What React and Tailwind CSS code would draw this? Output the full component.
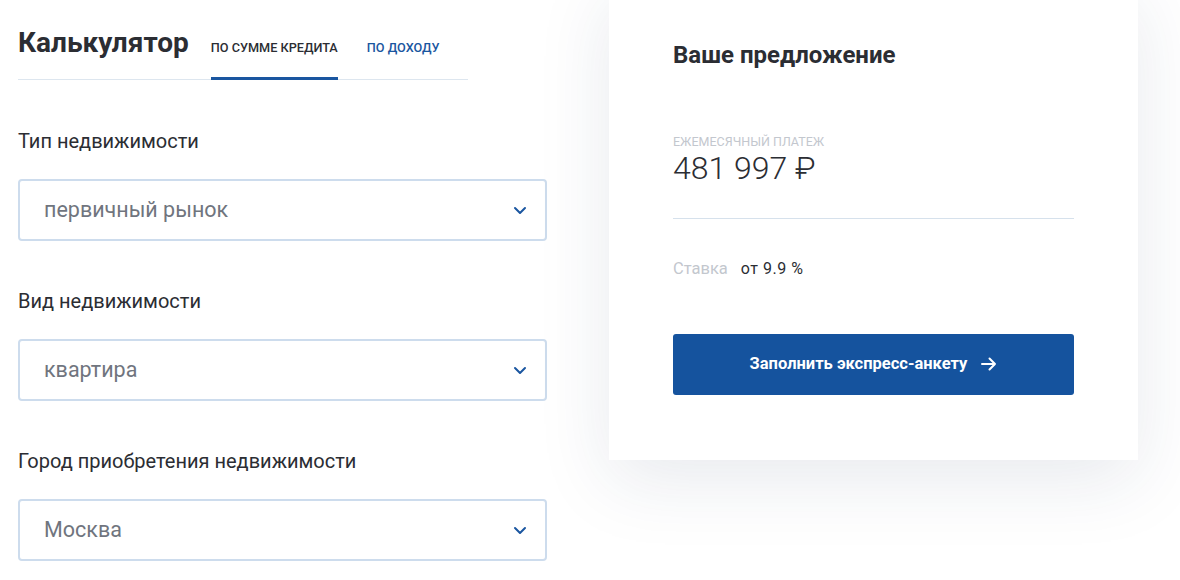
import React from "react";

const font = { fontFamily: "Roboto, 'Noto Sans', sans-serif" };

function Chevron() {
  return (
    <svg width="14" height="9" viewBox="0 0 14 9" fill="none">
      <path d="M2 2l5 5 5-5" stroke="#1a56a0" strokeWidth="2" strokeLinecap="round" strokeLinejoin="round" />
    </svg>
  );
}

function SelectField({ label, value }) {
  return (
    <div>
      <div className="text-[20px] leading-6 text-[#2b2d33]">{label}</div>
      <div className="mt-[26px] h-[62px] border-2 border-[#cddced] rounded-[4px] flex items-center justify-between pl-6 pr-[18px] bg-white">
        <span className="text-[21.5px] text-[#70757e]">{value}</span>
        <Chevron />
      </div>
    </div>
  );
}

export default function App() {
  return (
    <div style={font} className="w-[1180px] h-[580px] bg-white overflow-hidden flex">
      {/* Left: calculator */}
      <div className="ml-[18px] w-[529px] shrink-0">
        <div className="w-[450px] h-[80px] flex border-b border-[#dde6ef]">
          <h1 className="text-[28px] font-bold text-[#2b2d33] leading-none pt-[29px]">Калькулятор</h1>
          <div className="ml-[22px] flex gap-[29px] -mb-px">
            <div className="h-full flex items-center pt-[19px] border-b-[3px] border-[#1a56a0] text-[12.7px] font-medium text-[#2b2d33] uppercase">
              по сумме кредита
            </div>
            <div className="h-full flex items-center pt-[19px] border-b-[3px] border-transparent text-[12.7px] font-medium text-[#1a56a0] uppercase">
              по доходу
            </div>
          </div>
        </div>

        <div className="mt-[49px] flex flex-col gap-[48px]">
          <SelectField label="Тип недвижимости" value="первичный рынок" />
          <SelectField label="Вид недвижимости" value="квартира" />
          <SelectField label="Город приобретения недвижимости" value="Москва" />
        </div>
      </div>

      {/* Right: offer card */}
      <div className="ml-[62px] w-[529px] h-[480px] -mt-[20px] shrink-0 bg-white shadow-[0_20px_70px_rgba(30,50,90,0.10)] pt-[60px] px-[64px]">
        <h2 className="text-[24px] leading-[30px] font-bold text-[#2b2d33]">Ваше предложение</h2>
        <div className="mt-[65px] text-[12.5px] leading-[14px] uppercase text-[#c3c7ce]">Ежемесячный платеж</div>
        <div className="mt-[1px] text-[32px] leading-[36px] font-light text-[#2b2d33]">481 997 ₽</div>
        <div className="mt-[32px] border-t border-[#d6e1ec]"></div>
        <div className="mt-[38px] flex items-baseline gap-[13px]">
          <span className="text-[16.5px] text-[#c3c7ce]">Ставка</span>
          <span className="text-[16px] tracking-[0.5px] text-[#2b2d33]">от 9.9 %</span>
        </div>
        <button className="mt-[52px] w-full h-[61px] bg-[#15539e] rounded-[3px] flex items-center justify-center gap-[14px] text-white text-[16.5px] font-bold">
          Заполнить экспресс-анкету
          <svg width="16" height="14" viewBox="0 0 16 14" fill="none">
            <path d="M1 7h13M8.5 1.5 14 7l-5.5 5.5" stroke="white" strokeWidth="2" strokeLinecap="round" strokeLinejoin="round" />
          </svg>
        </button>
      </div>
    </div>
  );
}
